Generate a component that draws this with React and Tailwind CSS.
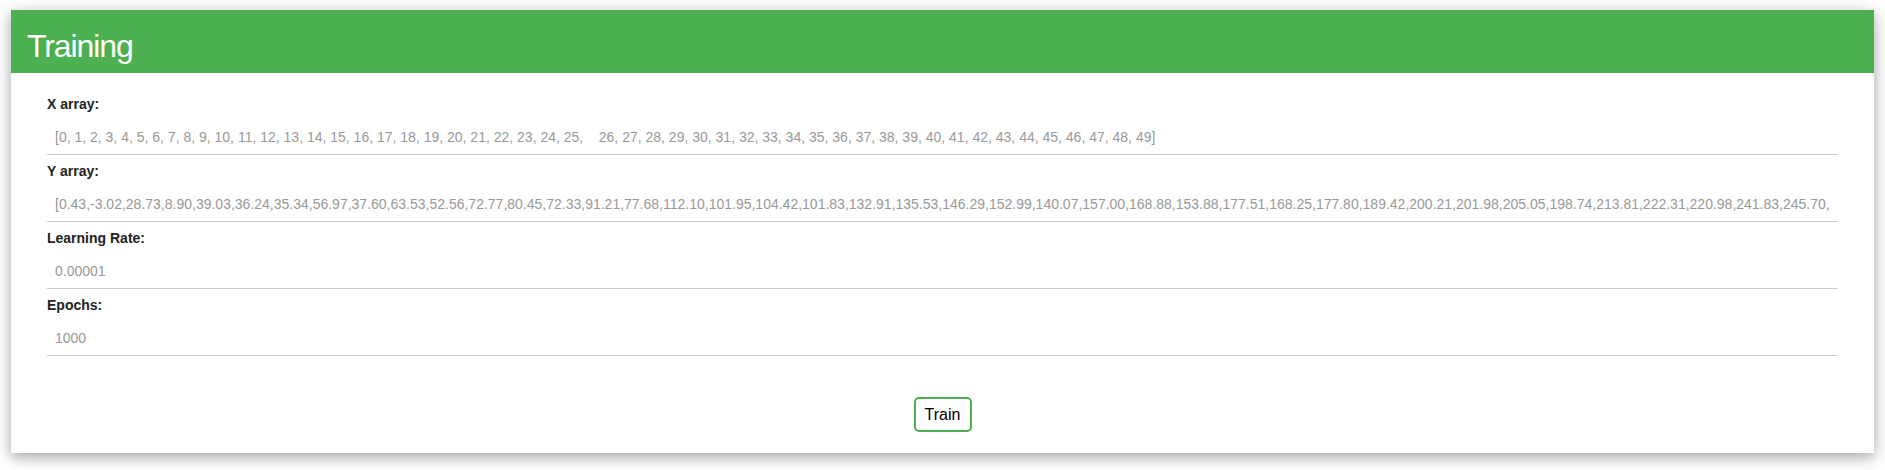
import React from 'react';

const xValues = '[0, 1, 2, 3, 4, 5, 6, 7, 8, 9, 10, 11, 12, 13, 14, 15, 16, 17, 18, 19, 20, 21, 22, 23, 24, 25,    26, 27, 28, 29, 30, 31, 32, 33, 34, 35, 36, 37, 38, 39, 40, 41, 42, 43, 44, 45, 46, 47, 48, 49]';
const yValues = '[0.43,-3.02,28.73,8.90,39.03,36.24,35.34,56.97,37.60,63.53,52.56,72.77,80.45,72.33,91.21,77.68,112.10,101.95,104.42,101.83,132.91,135.53,146.29,152.99,140.07,157.00,168.88,153.88,177.51,168.25,177.80,189.42,200.21,201.98,205.05,198.74,213.81,222.31,220.98,241.83,245.70,';

const fields = [
    { label: 'X array:', value: xValues },
    { label: 'Y array:', value: yValues },
    { label: 'Learning Rate:', value: '0.00001' },
    { label: 'Epochs:', value: '1000' },
];

export default function App() {
    return (
        <div className="min-h-[470px] bg-white pt-[10px] px-[11px]" style={{ fontFamily: '"Liberation Sans", Arial, sans-serif' }}>
            <div className="bg-white shadow-[0_4px_10px_0_rgba(0,0,0,0.2),0_4px_20px_0_rgba(0,0,0,0.19)]">
                {/* header */}
                <div className="bg-[#4CAF50] pl-4 pt-[18px] pb-[9px]">
                    <h2 className="text-[32px] leading-[36px] tracking-[-1.1px] text-white font-normal">Training</h2>
                </div>

                <div className="px-9 pt-[15px]">
                    {fields.map((field) => (
                        <div key={field.label} className="mt-2">
                            <label className="block text-[14px] leading-4 font-bold text-[#222]">{field.label}</label>
                            <input
                                type="text"
                                readOnly
                                value={field.value}
                                className="block w-full mt-2 h-[35px] px-2 text-[14px] text-[#999] border-b border-[#ccc] outline-none bg-transparent"
                            />
                        </div>
                    ))}
                </div>

                <div className="flex justify-center pt-[41px] pb-[21px]">
                    <button className="w-[58px] h-[35px] border-2 border-[#4CAF50] rounded-[5px] bg-white text-[16px] text-black">
                        Train
                    </button>
                </div>
            </div>
        </div>
    );
}
